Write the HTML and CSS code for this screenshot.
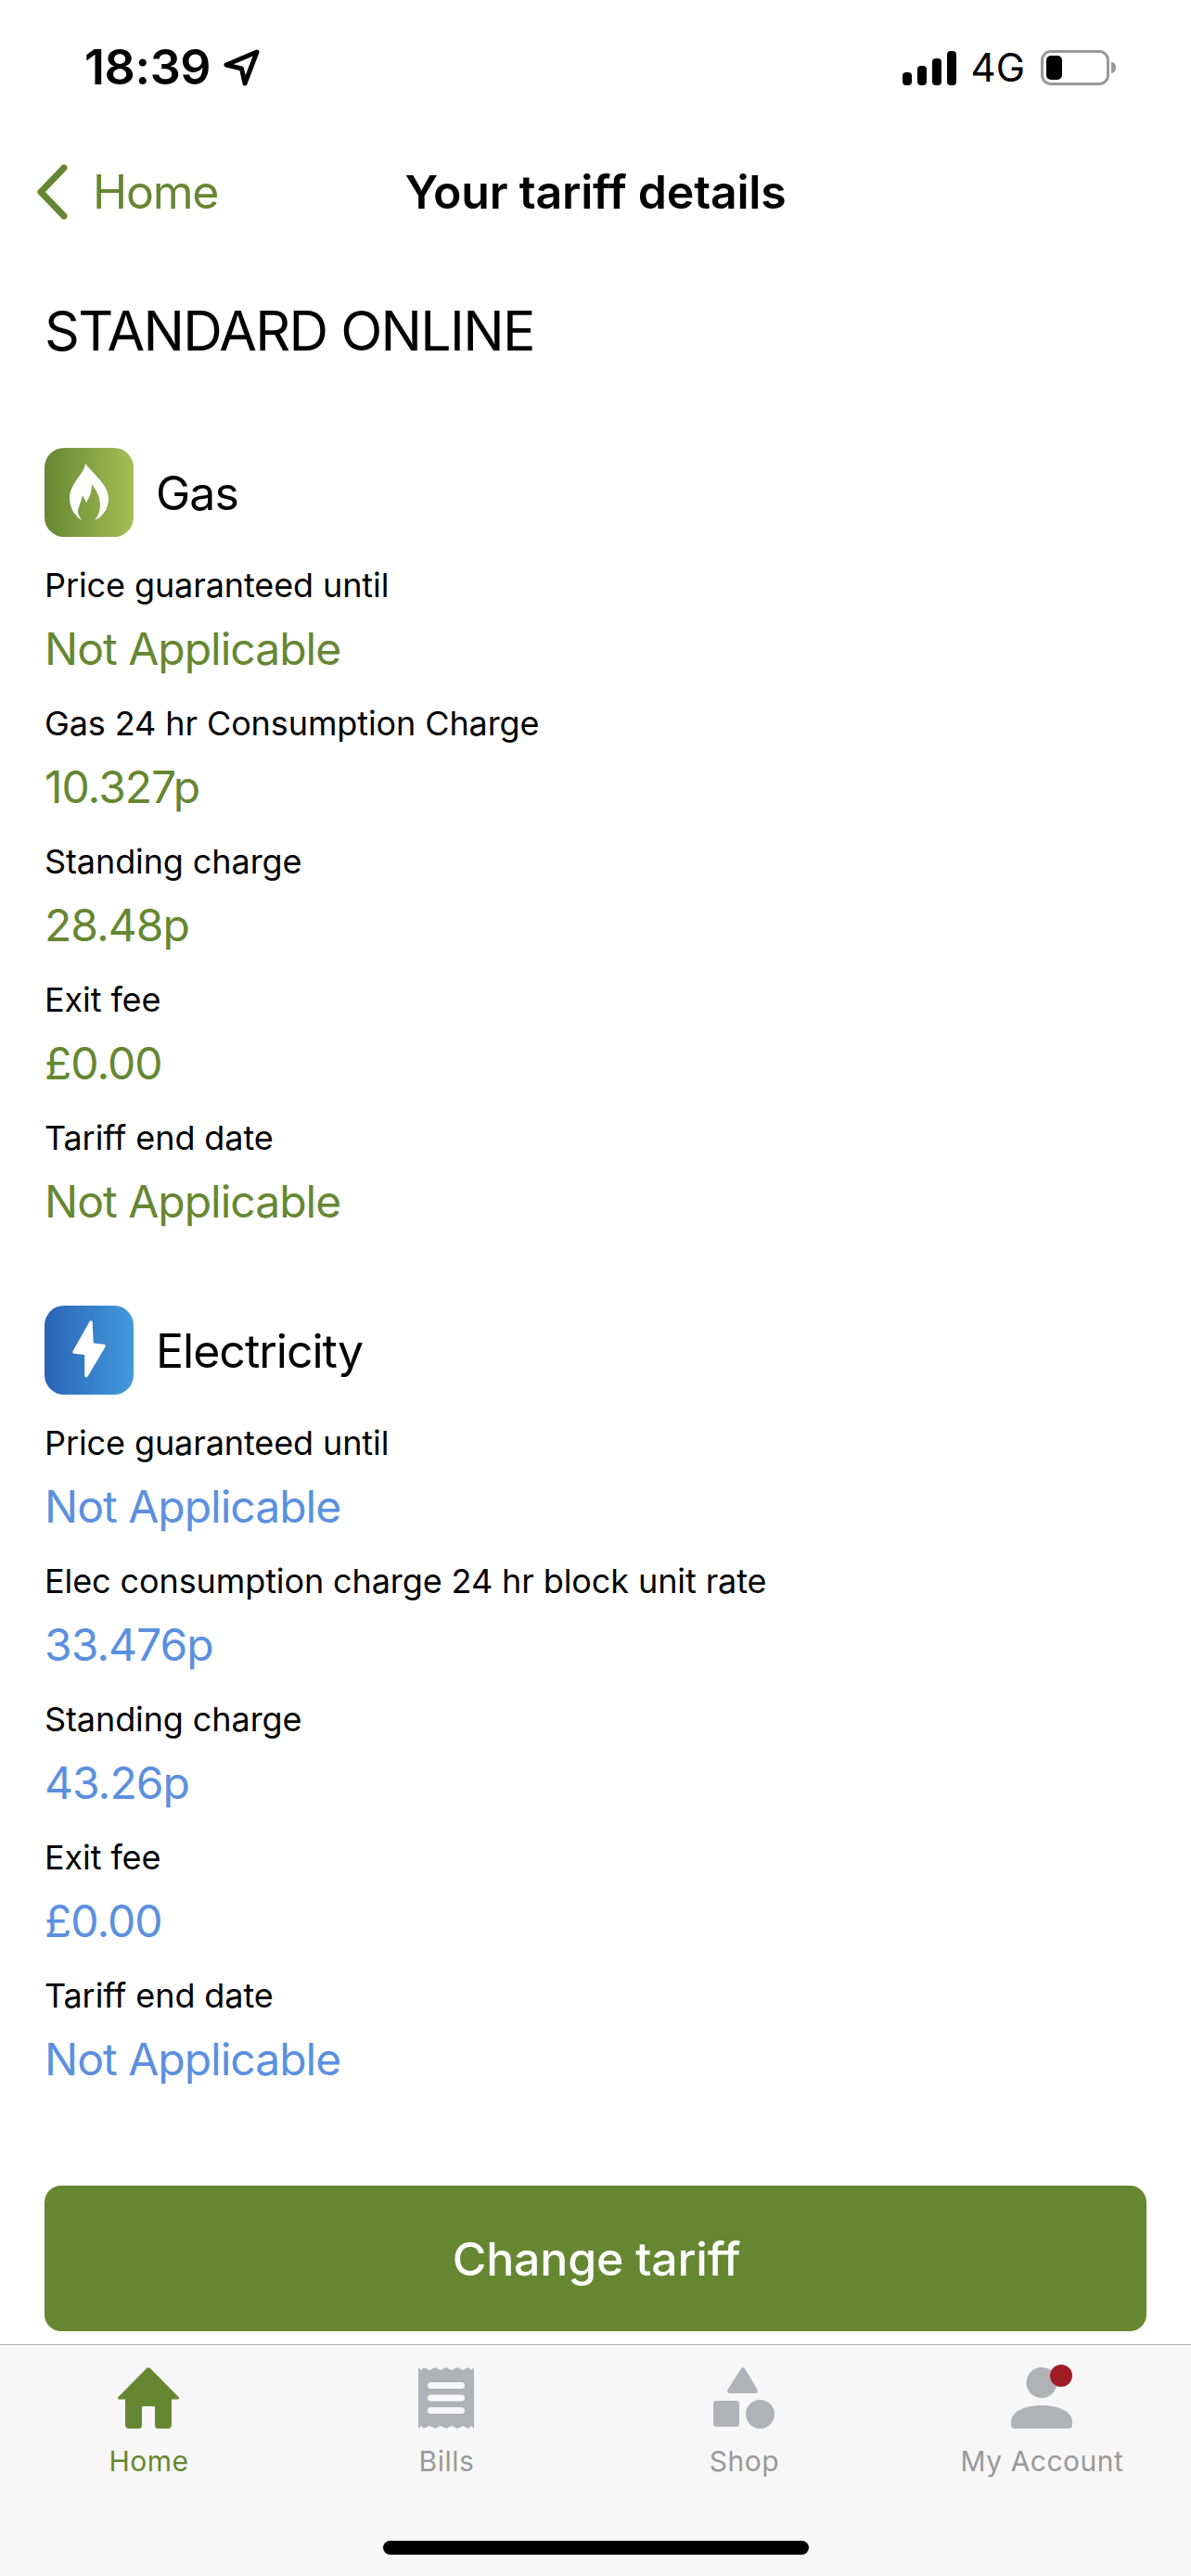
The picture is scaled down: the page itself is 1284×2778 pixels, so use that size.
FILE: index.html
```html
<!DOCTYPE html>
<html lang="en">
<head>
<meta charset="utf-8">
<title>Your tariff details</title>
<link rel="stylesheet" href="styles.css">
</head>
<body>
<div class="screen">
  <header class="status">
    <div class="status-left">
      <span class="time">18:39</span>
      <svg class="loc" viewBox="0 0 40 40"><path d="M36 3 3 17 19.500 21 23 37Z" fill="none" stroke="#000" stroke-width="5" stroke-linejoin="round"/></svg>
    </div>
    <div class="status-right">
      <svg class="signal" viewBox="0 0 58 37"><rect x="0" y="23" width="10" height="14" rx="4"/><rect x="16" y="16" width="10" height="21" rx="4"/><rect x="32" y="8" width="10" height="29" rx="4"/><rect x="48" y="0" width="10" height="37" rx="4"/></svg>
      <span class="net">4G</span>
      <div class="battery"><div class="battery-body"><div class="battery-fill"></div></div><div class="battery-cap"></div></div>
    </div>
  </header>

  <nav class="nav">
    <div class="back">
      <svg class="chev" viewBox="0 0 36 60"><path d="M31 4 6 30 31 56" fill="none" stroke="#668732" stroke-width="7" stroke-linecap="round" stroke-linejoin="round"/></svg>
      <span class="back-text">Home</span>
    </div>
    <div class="nav-title">Your tariff details</div>
    <div></div>
  </nav>

  <main class="main">
    <h1 class="plan">STANDARD ONLINE</h1>

    <section class="fuel gas">
      <div class="fuel-head">
        <div class="fuel-icon">
          <svg viewBox="0 0 96 96"><path d="M44 17C42 30 27 38 27 54C27 65 33 74 40 78C36 72 35 68 37 64C38 60 40 56 41 51L45 59C49 53 51 46 51 39C56 46 60 53 60 61C60 68 58 73 54 78C62 75 69 66 69 55C69 40 54 30 44 17Z" fill="#fff"/></svg>
        </div>
        <span class="fuel-name">Gas</span>
      </div>
      <div class="row"><div class="label">Price guaranteed until</div><div class="value">Not Applicable</div></div>
      <div class="row"><div class="label">Gas 24 hr Consumption Charge</div><div class="value">10.327p</div></div>
      <div class="row"><div class="label">Standing charge</div><div class="value">28.48p</div></div>
      <div class="row"><div class="label">Exit fee</div><div class="value">£0.00</div></div>
      <div class="row"><div class="label">Tariff end date</div><div class="value">Not Applicable</div></div>
    </section>

    <section class="fuel elec">
      <div class="fuel-head">
        <div class="fuel-icon">
          <svg viewBox="0 0 96 96"><path d="M50 18 32 50 45 51.500 45 75.500 64 43.500 51 42Z" fill="#fff" stroke="#fff" stroke-width="3.500" stroke-linejoin="round"/></svg>
        </div>
        <span class="fuel-name">Electricity</span>
      </div>
      <div class="row"><div class="label">Price guaranteed until</div><div class="value">Not Applicable</div></div>
      <div class="row"><div class="label">Elec consumption charge 24 hr block unit rate</div><div class="value">33.476p</div></div>
      <div class="row"><div class="label">Standing charge</div><div class="value">43.26p</div></div>
      <div class="row"><div class="label">Exit fee</div><div class="value">£0.00</div></div>
      <div class="row"><div class="label">Tariff end date</div><div class="value">Not Applicable</div></div>
    </section>

    <button class="cta" type="button">Change tariff</button>
  </main>

  <footer class="tabbar">
    <div class="tabs">
      <div class="tab active">
        <svg class="tab-icon" viewBox="0 0 66 66"><path d="M31 1C32 0 34 0 35 1L65.500 32C66.500 33 66 34.500 64.500 34.500H58V62C58 64.500 56.500 66 54 66H43C41 66 40 64.500 40 62V42H26V62C26 64.500 25 66 23 66H12C9.500 66 8 64.500 8 62V34.500H1.500C0 34.500 -.5 33 .5 32Z" fill="#668732"/></svg>
        <span class="tab-label">Home</span>
      </div>
      <div class="tab">
        <svg class="tab-icon" viewBox="0 0 60 66"><path d="M0 0 3 3 6 0 12 3 18 0 24 3 30 0 36 3 42 0 48 3 54 0 57 3 60 0V66L57 63 54 66 48 63 42 66 36 63 30 66 24 63 18 66 12 63 6 66 3 63 0 66Z" fill="#b0b2b5"/><rect x="10" y="16" width="40" height="7" rx="3.500" fill="#f7f7f7"/><rect x="10" y="29.500" width="40" height="7" rx="3.500" fill="#f7f7f7"/><rect x="10" y="43" width="40" height="7" rx="3.500" fill="#f7f7f7"/></svg>
        <span class="tab-label">Bills</span>
      </div>
      <div class="tab">
        <svg class="tab-icon" viewBox="0 0 66 66"><path d="M29.500 2C31 -.5 33 -.5 34.500 2L47.500 24C48.500 26.500 47.500 28 45 28H18C15.500 28 14.500 26.500 15.500 24Z" fill="#b0b2b5"/><rect x="0" y="36" width="28" height="28" rx="3" fill="#b0b2b5"/><ellipse cx="50.500" cy="50.500" rx="15.500" ry="15.500" fill="#b0b2b5"/></svg>
        <span class="tab-label">Shop</span>
      </div>
      <div class="tab">
        <svg class="tab-icon" viewBox="0 0 66 66"><circle cx="33" cy="16.500" r="16.500" fill="#b0b2b5"/><path d="M0 59C0 48 14 41 33 41S66 48 66 59V62C66 64.500 64.500 66 62 66H4C1.500 66 0 64.500 0 62Z" fill="#b0b2b5"/><circle cx="54" cy="9" r="12" fill="#9f1c26"/></svg>
        <span class="tab-label">My Account</span>
      </div>
    </div>
    <div class="home-indicator"></div>
  </footer>
</div>
</body>
</html>
```
FILE: styles.css
```css
* { box-sizing: border-box; margin: 0; padding: 0; }
html, body { width: 1284px; height: 2778px; overflow: hidden; background: #fff; }
body { font-family: Inter, "Liberation Sans", sans-serif; color: #000; }
.screen { width: 1284px; height: 2778px; display: flex; flex-direction: column; }

.status { height: 146px; display: flex; align-items: center; justify-content: space-between; padding: 0 81px 0 91px; flex: none; }
.status-left { display: flex; align-items: center; gap: 14px; }
.time { font-size: 52px; font-weight: 600; line-height: 60px; letter-spacing: -.4px; }
.loc { width: 40px; height: 40px; display: block; }
.status-right { display: flex; align-items: center; }
.signal { width: 58px; height: 37px; display: block; }
.net { font-size: 42px; line-height: 50px; margin-left: 16px; }
.battery { display: flex; align-items: center; margin-left: 17px; }
.battery-body { width: 74px; height: 38px; border: 3px solid #999; border-radius: 11px; padding: 3px; }
.battery-fill { width: 17px; height: 100%; background: #000; border-radius: 5px; }
.battery-cap { width: 5px; height: 12px; background: #999; border-radius: 0 6px 6px 0; margin-left: 2px; }

.nav { height: 122px; display: grid; grid-template-columns: 1fr auto 1fr; align-items: center; flex: none; }
.back { display: flex; align-items: center; padding-left: 38px; gap: 26px; }
.chev { width: 36px; height: 60px; display: block; }
.back-text { font-size: 50px; color: #668732; line-height: 60px; letter-spacing: -1.2px; }
.nav-title { font-size: 50px; font-weight: 600; line-height: 60px; letter-spacing: -.2px; }

.main { flex: 1; display: flex; flex-direction: column; padding: 53px 48px 14px; min-height: 0; }
.plan { font-size: 59px; font-weight: 400; line-height: 72px; letter-spacing: -1.7px; }
.fuel { margin-top: 90px; }
.fuel + .fuel { margin-top: 79px; }
.fuel-head { display: flex; align-items: center; gap: 24px; height: 96px; margin-bottom: 5px; }
.fuel-icon { width: 96px; height: 96px; border-radius: 21px; flex: none; }
.fuel-icon svg { width: 96px; height: 96px; display: block; }
.gas .fuel-icon { background: linear-gradient(90deg, #668732, #a5bf55); }
.elec .fuel-icon { background: linear-gradient(90deg, #2b63b5, #429adb); }
.fuel-name { font-size: 50px; line-height: 60px; letter-spacing: -1px; padding-top: 2px; }
.row { padding-top: 20px; }
.label { font-size: 36px; line-height: 54px; letter-spacing: -.1px; }
.value { font-size: 48px; line-height: 66px; margin-top: 9px; letter-spacing: -1px; }
.gas .value { color: #668732; }
.elec .value { color: #5b90df; }

.cta { margin-top: auto; height: 157px; width: 100%; border: 0; border-radius: 18px; background: #668732; color: #fff; font-family: inherit; font-size: 50px; font-weight: 550; padding-left: 2px; letter-spacing: -.2px; }

.tabbar { height: 250px; flex: none; background: #f7f7f7; border-top: 1px solid #b0b0b0; padding-top: 24px; display: flex; flex-direction: column; align-items: center; }
.tabs { width: 100%; display: grid; grid-template-columns: repeat(4, 1fr); }
.tab { display: flex; flex-direction: column; align-items: center; }
.tab-icon { height: 66px; display: block; overflow: visible; margin-right: 2px; }
.tab-label { font-size: 30px; line-height: 36px; margin-top: 17px; color: #999; letter-spacing: .5px; }
.active .tab-label { color: #668732; }
.home-indicator { width: 459px; height: 15px; border-radius: 8px; background: #000; margin-top: 68px; }
```
